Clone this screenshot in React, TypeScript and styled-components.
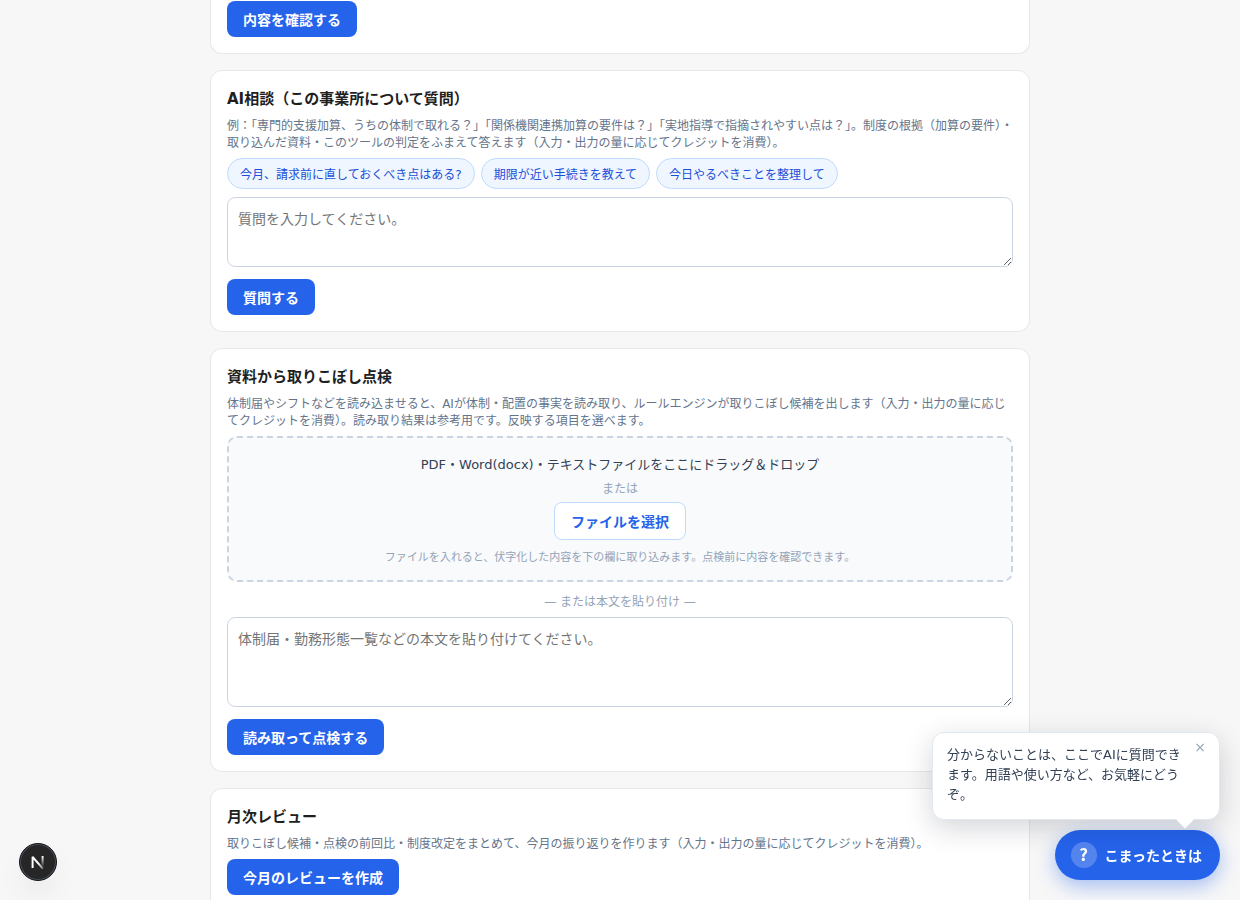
import React, { useState } from "react";
import styled, { createGlobalStyle } from "styled-components";

const GlobalStyle = createGlobalStyle`
  *, *::before, *::after { box-sizing: border-box; }
  body {
    margin: 0;
    background: #f7f7f7;
    color: #1f1f1f;
  }
  body, button, textarea {
    font-family: "DejaVu Sans", "Noto Sans CJK JP", sans-serif;
    line-height: normal;
  }
`;

const Page = styled.div`
  height: 100vh;
  overflow: hidden;
`;

const Main = styled.main`
  display: flex;
  flex-direction: column;
  gap: 16px;
  max-width: 820px;
  margin: 0 auto;
`;

const Card = styled.section<{ $continued?: boolean }>`
  display: flex;
  flex-direction: column;
  align-items: flex-start;
  background: #ffffff;
  border: 1px solid #e5e7eb;
  border-radius: 12px;
  padding: 16px;
  ${(p) =>
    p.$continued &&
    `
    border-top: 0;
    border-radius: 0 0 12px 12px;
    padding-top: 1px;
  `}
`;

const Title = styled.h2`
  margin: 0 0 8px;
  font-size: 15px;
  font-weight: 700;
`;

const Description = styled.p`
  margin: 0 0 8px;
  font-size: 12px;
  color: #64748b;
`;

const PrimaryButton = styled.button`
  height: 36px;
  padding: 0 16px;
  border: 0;
  border-radius: 8px;
  background: #2563eb;
  color: #ffffff;
  font-size: 14px;
  font-weight: 600;
  cursor: pointer;
`;

const Suggestions = styled.div`
  display: flex;
  flex-wrap: wrap;
  gap: 6px;
  margin-bottom: 8px;
`;

const Suggestion = styled.button`
  padding: 6px 12px;
  border: 1px solid #bfdbfe;
  border-radius: 999px;
  background: #eff6ff;
  color: #1d4ed8;
  font-size: 12px;
  cursor: pointer;
`;

const TextArea = styled.textarea<{ $height: number }>`
  display: block;
  width: 100%;
  height: ${(p) => p.$height}px;
  margin: 0 0 12px;
  padding: 10px;
  border: 1px solid #cbd5e1;
  border-radius: 8px;
  background: #ffffff;
  font-size: 14px;
  resize: vertical;
  &::placeholder { color: #757575; }
`;

const DropZone = styled.div`
  display: flex;
  flex-direction: column;
  align-items: center;
  width: 100%;
  padding: 16px;
  border: 2px dashed #cbd5e1;
  border-radius: 10px;
  background: #f8fafc;
`;

const DropLabel = styled.p`
  margin: 0 0 6px;
  font-size: 13px;
  color: #334155;
`;

const Hint = styled.p`
  margin: 0;
  font-size: 12px;
  color: #94a3b8;
`;

const FileButton = styled.button`
  height: 38px;
  margin: 6px 0 8px;
  padding: 0 16px;
  border: 1px solid #bfdbfe;
  border-radius: 8px;
  background: #ffffff;
  color: #2563eb;
  font-size: 14px;
  font-weight: 600;
  cursor: pointer;
`;

const DropNote = styled.p`
  margin: 0;
  font-size: 11px;
  color: #94a3b8;
`;

const Divider = styled(Hint)`
  align-self: center;
  margin: 10px 0 8px;
`;

const HelpDock = styled.aside`
  position: fixed;
  right: 20px;
  bottom: 20px;
  display: flex;
  flex-direction: column;
  align-items: flex-end;
  gap: 10px;
`;

const Bubble = styled.div`
  position: relative;
  width: 288px;
  padding: 12px 36px 14px 14px;
  border: 1px solid #e2e8f0;
  border-radius: 12px;
  background: #ffffff;
  box-shadow: 0 8px 28px rgba(15, 23, 42, 0.18);
  z-index: 1;
  &::after {
    content: "";
    position: absolute;
    right: 28px;
    bottom: -7px;
    width: 12px;
    height: 12px;
    background: #ffffff;
    transform: rotate(45deg);
  }
`;

const BubbleText = styled.p`
  margin: 0;
  font-size: 13px;
  line-height: 20px;
  color: #334155;
`;

const CloseButton = styled.button`
  position: absolute;
  top: 4px;
  right: 9px;
  width: 20px;
  height: 20px;
  padding: 0;
  border: 0;
  background: transparent;
  color: #94a3b8;
  font-size: 14px;
  line-height: 20px;
  cursor: pointer;
`;

const HelpButton = styled.button`
  display: flex;
  align-items: center;
  gap: 8px;
  height: 50px;
  padding: 0 18px 0 16px;
  border: 0;
  border-radius: 999px;
  background: #2563eb;
  box-shadow: 0 6px 20px rgba(37, 99, 235, 0.4);
  color: #ffffff;
  font-size: 14px;
  font-weight: 700;
  cursor: pointer;
`;

const HelpMark = styled.span`
  display: flex;
  align-items: center;
  justify-content: center;
  width: 26px;
  height: 26px;
  padding-bottom: 2px;
  border-radius: 50%;
  background: rgba(255, 255, 255, 0.22);
  font-family: "Noto Sans CJK JP", sans-serif;
  font-size: 17px;
  line-height: 20px;
`;

const DevBadge = styled.button`
  position: fixed;
  left: 19px;
  bottom: 19px;
  display: flex;
  align-items: center;
  justify-content: center;
  width: 38px;
  height: 38px;
  padding: 0;
  border: 1px solid #171717;
  border-radius: 50%;
  background: #262626;
  box-shadow: inset 0 0 0 1px #475060, 0 16px 32px -8px rgba(0, 0, 0, 0.14);
  cursor: pointer;
`;

const questions = [
  "今月、請求前に直しておくべき点はある?",
  "期限が近い手続きを教えて",
  "今日やるべきことを整理して",
];

function NextMark() {
  return (
    <svg width="36" height="36" viewBox="1 1 36 36" fill="none" aria-hidden="true">
      <defs>
        <linearGradient id="diagonal" x1="20" y1="20" x2="25" y2="26" gradientUnits="userSpaceOnUse">
          <stop stopColor="#fff" />
          <stop offset="1" stopColor="#fff" stopOpacity="0.3" />
        </linearGradient>
        <linearGradient id="stem" x1="23" y1="13" x2="23" y2="24" gradientUnits="userSpaceOnUse">
          <stop stopColor="#fff" />
          <stop offset="1" stopColor="#fff" stopOpacity="0" />
        </linearGradient>
      </defs>
      <path d="M13.6 25V13.8L23.8 25.6" stroke="url(#diagonal)" strokeWidth="2" strokeLinejoin="bevel" />
      <path d="M23.6 13V24" stroke="url(#stem)" strokeWidth="2" />
    </svg>
  );
}

export default function App() {
  const [question, setQuestion] = useState("");
  const [source, setSource] = useState("");
  const [bubbleOpen, setBubbleOpen] = useState(true);

  return (
    <>
      <GlobalStyle />
      <Page>
        <Main>
          <Card $continued>
            <PrimaryButton type="button">内容を確認する</PrimaryButton>
          </Card>

          <Card>
            <Title>AI相談（この事業所について質問）</Title>
            <Description>
              例：「専門的支援加算、うちの体制で取れる？」「関係機関連携加算の要件は？」「実地指導で指摘されやすい点は？」。制度の根拠（加算の要件）・取り込んだ資料・このツールの判定をふまえて答えます（入力・出力の量に応じてクレジットを消費）。
            </Description>
            <Suggestions>
              {questions.map((q) => (
                <Suggestion key={q} type="button" onClick={() => setQuestion(q)}>
                  {q}
                </Suggestion>
              ))}
            </Suggestions>
            <TextArea
              $height={70}
              aria-label="質問"
              placeholder="質問を入力してください。"
              value={question}
              onChange={(e) => setQuestion(e.target.value)}
            />
            <PrimaryButton type="button">質問する</PrimaryButton>
          </Card>

          <Card>
            <Title>資料から取りこぼし点検</Title>
            <Description>
              体制届やシフトなどを読み込ませると、AIが体制・配置の事実を読み取り、ルールエンジンが取りこぼし候補を出します（入力・出力の量に応じてクレジットを消費）。読み取り結果は参考用です。反映する項目を選べます。
            </Description>
            <DropZone>
              <DropLabel>PDF・Word(docx)・テキストファイルをここにドラッグ＆ドロップ</DropLabel>
              <Hint>または</Hint>
              <FileButton type="button">ファイルを選択</FileButton>
              <DropNote>ファイルを入れると、伏字化した内容を下の欄に取り込みます。点検前に内容を確認できます。</DropNote>
            </DropZone>
            <Divider>— または本文を貼り付け —</Divider>
            <TextArea
              $height={90}
              aria-label="本文"
              placeholder="体制届・勤務形態一覧などの本文を貼り付けてください。"
              value={source}
              onChange={(e) => setSource(e.target.value)}
            />
            <PrimaryButton type="button">読み取って点検する</PrimaryButton>
          </Card>

          <Card>
            <Title>月次レビュー</Title>
            <Description>
              取りこぼし候補・点検の前回比・制度改定をまとめて、今月の振り返りを作ります（入力・出力の量に応じてクレジットを消費）。
            </Description>
            <PrimaryButton type="button">今月のレビューを作成</PrimaryButton>
          </Card>
        </Main>
      </Page>

      <HelpDock>
        {bubbleOpen && (
          <Bubble>
            <BubbleText>分からないことは、ここでAIに質問できます。用語や使い方など、お気軽にどうぞ。</BubbleText>
            <CloseButton type="button" aria-label="閉じる" onClick={() => setBubbleOpen(false)}>
              ×
            </CloseButton>
          </Bubble>
        )}
        <HelpButton type="button">
          <HelpMark>?</HelpMark>
          こまったときは
        </HelpButton>
      </HelpDock>

      <DevBadge type="button" aria-label="開発ツール">
        <NextMark />
      </DevBadge>
    </>
  );
}
